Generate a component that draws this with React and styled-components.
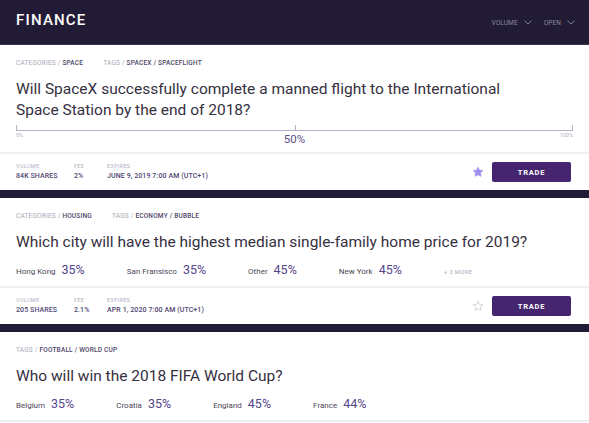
import React from "react";
import styled, { createGlobalStyle } from "styled-components";

const Global = createGlobalStyle`
  html, body { margin: 0; padding: 0; background: #211b35; }
  body { font-family: Roboto, "Noto Sans", sans-serif; -webkit-font-smoothing: antialiased; }
  * { box-sizing: border-box; }
`;

const Page = styled.div`
  width: 589px;
  height: 423px;
  overflow: hidden;
  background: #211b35;
  display: flex;
  flex-direction: column;
`;

const Header = styled.header`
  height: 45px;
  flex-shrink: 0;
  display: flex;
  align-items: center;
  justify-content: space-between;
  padding: 0 14px 0 16px;
  border-bottom: 1px solid #3a3450;
`;

const Brand = styled.div`
  color: #fff;
  font-size: 15px;
  font-weight: 500;
  letter-spacing: 1.2px;
  margin-top: -5px;
`;

const Filters = styled.div`
  display: flex;
  gap: 12px;
  align-items: center;
  margin-top: 1px;
`;

const Filter = styled.div`
  display: flex;
  align-items: center;
  gap: 6px;
  color: #8d88a0;
  font-size: 6.5px;
  letter-spacing: 0.1px;
  text-transform: uppercase;
`;

const List = styled.div`
  flex: 1;
  display: flex;
  flex-direction: column;
  gap: 8px;
`;

const Card = styled.section`
  background: #fff;
  flex: ${(p) => (p.$fill ? 1 : "none")};
`;

const Body = styled.div`
  padding: 14px 16px ${(p) => p.$pb ?? 6}px 16px;
  border-bottom: 2px solid #efeef2;
`;

const Meta = styled.div`
  display: flex;
  gap: 20px;
  font-size: 6.5px;
  letter-spacing: 0.2px;
  text-transform: uppercase;
  color: #aaa6b6;
  height: 9px;
  line-height: 9px;
  b {
    color: #4d4566;
    font-weight: 500;
  }
`;

const Title = styled.h2`
  margin: 11px 0 0;
  font-size: 15.5px;
  font-weight: 400;
  line-height: 21px;
  color: #36303f;
  max-width: ${(p) => p.$max || 540}px;
`;

const Slider = styled.div`
  margin-top: 4px;
  height: 27px;
`;

const Track = styled.div`
  position: relative;
  height: 6px;
  border-bottom: 1.5px solid #b5aec8;
`;

const Tick = styled.span`
  position: absolute;
  bottom: 0;
  width: 1px;
  height: 5px;
  background: #b5aec8;
  left: ${(p) => p.$at};
`;

const Scale = styled.div`
  display: grid;
  grid-template-columns: 1fr auto 1fr;
  align-items: start;
`;

const Small = styled.span`
  font-size: 5.5px;
  color: #b7b3c2;
  margin-top: 1px;
  justify-self: ${(p) => p.$align || "start"};
`;

const Mid = styled.span`
  font-size: 11.5px;
  line-height: 13px;
  color: #5d4f8a;
  margin-top: 2px;
`;

const Options = styled.div`
  display: flex;
  align-items: baseline;
  margin-top: 9px;
  height: 18px;
`;

const Option = styled.div`
  display: flex;
  align-items: baseline;
  gap: 6px;
  margin-right: 42px;
`;

const OptName = styled.span`
  font-size: 8px;
  color: #4b4658;
`;

const OptPct = styled.span`
  font-size: 12.5px;
  color: #55468a;
`;

const More = styled.span`
  font-size: 6px;
  color: #b0acbc;
  letter-spacing: 0.3px;
`;

const Footer = styled.div`
  height: 36px;
  display: flex;
  align-items: center;
  justify-content: space-between;
  padding: 0 18px 0 16px;
`;

const Stats = styled.div`
  display: flex;
  margin-top: -1px;
`;

const Stat = styled.div`
  display: flex;
  flex-direction: column;
  gap: 3px;
  width: ${(p) => p.$w}px;
`;

const StatLabel = styled.span`
  font-size: 5.5px;
  letter-spacing: 0.3px;
  color: #b3afbf;
  text-transform: uppercase;
`;

const StatValue = styled.span`
  font-size: 7px;
  letter-spacing: 0.1px;
  color: #4e4570;
  font-weight: 500;
  text-transform: uppercase;
`;

const Actions = styled.div`
  display: flex;
  align-items: center;
  gap: 8px;
`;

const Trade = styled.button`
  width: 79px;
  height: 20px;
  border: none;
  border-radius: 2px;
  background: #45256f;
  color: #fff;
  font-family: Roboto, sans-serif;
  font-size: 7.5px;
  font-weight: 700;
  letter-spacing: 0.8px;
  cursor: pointer;
`;

const Chevron = () => (
  <svg width="8" height="5" viewBox="0 0 8 5" fill="none">
    <path d="M0.5 0.7 L4 4 L7.5 0.7" stroke="#8d88a0" strokeWidth="0.9" />
  </svg>
);

const Star = ({ filled }) => (
  <svg width="12" height="12" viewBox="0 0 24 24">
    <path
      d="M12 2.5l2.9 6.2 6.6.7-4.9 4.6 1.4 6.6L12 17.3l-5.9 3.3 1.4-6.6-4.9-4.6 6.6-.7z"
      fill={filled ? "#9d8ef0" : "none"}
      stroke={filled ? "#9d8ef0" : "#c9c6d3"}
      strokeWidth="1.5"
      strokeLinejoin="round"
    />
  </svg>
);

const CardFooter = ({ volume, fee, expires, starred }) => (
  <Footer>
    <Stats>
      <Stat $w={58}>
        <StatLabel>Volume</StatLabel>
        <StatValue>{volume}</StatValue>
      </Stat>
      <Stat $w={33}>
        <StatLabel>Fee</StatLabel>
        <StatValue>{fee}</StatValue>
      </Stat>
      <Stat $w={200}>
        <StatLabel>Expires</StatLabel>
        <StatValue>{expires}</StatValue>
      </Stat>
    </Stats>
    <Actions>
      <Star filled={starred} />
      <Trade>TRADE</Trade>
    </Actions>
  </Footer>
);

const OptionRow = ({ items, more }) => (
  <Options>
    {items.map(([n, p]) => (
      <Option key={n}>
        <OptName>{n}</OptName>
        <OptPct>{p}</OptPct>
      </Option>
    ))}
    {more && <More>{more}</More>}
  </Options>
);

export default function App() {
  return (
    <Page>
      <Global />
      <Header>
        <Brand>FINANCE</Brand>
        <Filters>
          <Filter>
            Volume <Chevron />
          </Filter>
          <Filter>
            Open <Chevron />
          </Filter>
        </Filters>
      </Header>
      <List>
        <Card>
          <Body $pb={0}>
            <Meta>
              <span>
                Categories / <b>Space</b>
              </span>
              <span>
                Tags / <b>SpaceX / Spaceflight</b>
              </span>
            </Meta>
            <Title $max={490}>
              Will SpaceX successfully complete a manned flight to the International Space Station by the end of 2018?
            </Title>
            <Slider>
              <Track>
                <Tick $at="0" />
                <Tick $at="50%" />
                <Tick $at="calc(100% - 1px)" />
              </Track>
              <Scale>
                <Small>0%</Small>
                <Mid>50%</Mid>
                <Small $align="end">100%</Small>
              </Scale>
            </Slider>
          </Body>
          <CardFooter volume="84K Shares" fee="2%" expires="June 9, 2019 7:00 AM (UTC+1)" starred />
        </Card>
        <Card>
          <Body>
            <Meta>
              <span>
                Categories / <b>Housing</b>
              </span>
              <span>
                Tags / <b>Economy / Bubble</b>
              </span>
            </Meta>
            <Title>Which city will have the highest median single-family home price for 2019?</Title>
            <OptionRow
              items={[
                ["Hong Kong", "35%"],
                ["San Fransisco", "35%"],
                ["Other", "45%"],
                ["New York", "45%"],
              ]}
              more="+ 3 MORE"
            />
          </Body>
          <CardFooter volume="205 Shares" fee="2.1%" expires="Apr 1, 2020 7:00 AM (UTC+1)" />
        </Card>
        <Card $fill>
          <Body>
            <Meta>
              <span>
                Tags / <b>Football / World Cup</b>
              </span>
            </Meta>
            <Title>Who will win the 2018 FIFA World Cup?</Title>
            <OptionRow
              items={[
                ["Belgium", "35%"],
                ["Croatia", "35%"],
                ["England", "45%"],
                ["France", "44%"],
              ]}
            />
          </Body>
        </Card>
      </List>
    </Page>
  );
}
